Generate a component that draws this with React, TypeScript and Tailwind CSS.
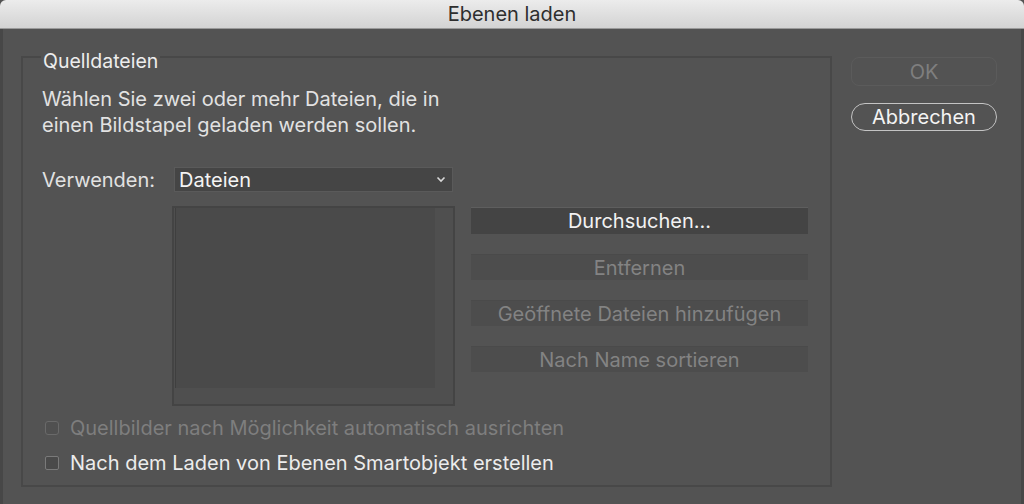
const FONT = { fontFamily: "Inter, 'Noto Sans', sans-serif" };

function SideButton({ label, primary }: { label: string; primary?: boolean }) {
  return (
    <div
      className={
        primary
          ? "flex h-[27px] items-center justify-center border-t border-[#5e5e5e] bg-[#444444] text-[20px] leading-none text-[#f2f2f2]"
          : "flex h-[26px] items-center justify-center border-t border-[#4a4a4a] bg-[#4d4d4d] text-[20px] leading-none text-[#838383]"
      }
    >
      {label}
    </div>
  );
}

function Check({ label, disabled }: { label: string; disabled?: boolean }) {
  return (
    <div className="flex h-[26px] items-center gap-[11px]">
      <span
        className={
          disabled
            ? "h-[14px] w-[14px] rounded-[3px] border border-[#6a6a6a] bg-[#505050]"
            : "h-[14px] w-[14px] rounded-[2px] border border-[#7a7a7a] bg-[#4a4a4a]"
        }
      />
      <span className={disabled ? "text-[20px] leading-none text-[#7e7e7e]" : "text-[20px] leading-none text-[#ececec]"}>
        {label}
      </span>
    </div>
  );
}

export default function App() {
  return (
    <div className="flex h-[504px] w-[1024px] flex-col overflow-hidden bg-[#535353]" style={FONT}>
      {/* title bar */}
      <div className="flex h-[29px] shrink-0 items-center justify-center rounded-t-[6px] border-b border-[#9a9a9a] bg-gradient-to-b from-[#ececec] to-[#d3d3d3]">
        <span className="text-[20px] leading-none text-[#2e2e2e]">Ebenen laden</span>
      </div>

      <div className="flex flex-1 border-x-[3px] border-[#474747]">
        {/* group box */}
        <div className="relative ml-[18px] mt-[27px] h-[431px] w-[811px] border-2 border-[#484848]">
          <span className="absolute left-[18px] top-[-8px] bg-[#535353] px-[2px] text-[19.5px] leading-[22px] text-[#ededed]">
            Quelldateien
          </span>

          <div className="pl-[19px] pt-[28px]">
            <p className="text-[20px] leading-[26px] text-[#e2e2e2]">
              Wählen Sie zwei oder mehr Dateien, die in
              <br />
              einen Bildstapel geladen werden sollen.
            </p>

            <div className="mt-[29px] flex items-center">
              <span className="w-[132px] text-[20px] leading-none text-[#e2e2e2]">Verwenden:</span>
              <div className="flex h-[25px] w-[279px] items-center justify-between border border-[#5a5a5a] bg-[#454545] pl-[4px] pr-[6px]">
                <span className="text-[20px] leading-none text-[#f4f4f4]">Dateien</span>
                <svg width="10" height="7" viewBox="0 0 10 7" fill="none">
                  <path d="M1.5 1.5 5 5l3.5-3.5" stroke="#d8d8d8" strokeWidth="1.6" />
                </svg>
              </div>
            </div>

            <div className="mt-[14px] flex">
              <div className="ml-[130px] flex h-[200px] w-[283px] border-2 border-[#444444] bg-[#4f4f4f]">
                <div className="mb-[16px] ml-[1px] flex-1 border-l border-[#3f3f3f] bg-[#4a4a4a]" />
                <div className="w-[18px]" />
              </div>

              <div className="ml-[16px] flex w-[337px] flex-col gap-[20px] pt-[1px]">
                <SideButton label="Durchsuchen..." primary />
                <SideButton label="Entfernen" />
                <SideButton label="Geöffnete Dateien hinzufügen" />
                <SideButton label="Nach Name sortieren" />
              </div>
            </div>

            <div className="mt-[9px] flex flex-col gap-[9px] pl-[3px]">
              <Check label="Quellbilder nach Möglichkeit automatisch ausrichten" disabled />
              <Check label="Nach dem Laden von Ebenen Smartobjekt erstellen" />
            </div>
          </div>
        </div>

        {/* dialog buttons */}
        <div className="ml-[19px] mt-[28px] flex w-[146px] flex-col gap-[17px]">
          <div className="flex h-[29px] items-center justify-center rounded-[8px] border border-[#5b5b5b] text-[20px] leading-none text-[#7f7f7f]">
            OK
          </div>
          <div className="flex h-[28px] items-center justify-center rounded-full border-[1.5px] border-[#c4c4c4] text-[20px] leading-none text-[#f4f4f4]">
            Abbrechen
          </div>
        </div>
      </div>
    </div>
  );
}
